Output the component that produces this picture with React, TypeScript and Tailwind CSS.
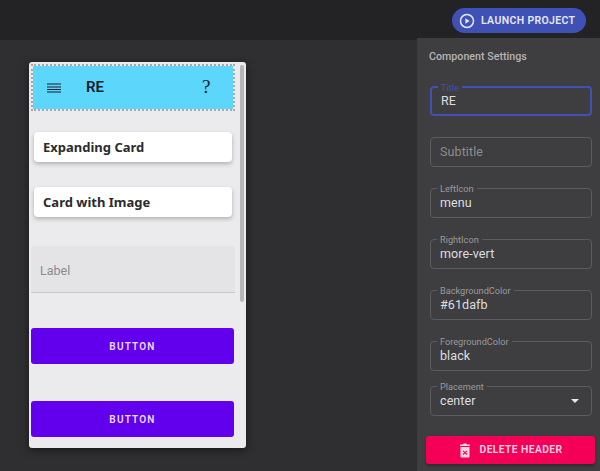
const fieldFont = { fontFamily: "Roboto, sans-serif" };

function Field({ label, value, focused, muted, select, className }: { label?: string; value: string; focused?: boolean; muted?: boolean; select?: boolean; className?: string }) {
  return (
    <div className={`relative h-[30px] rounded-[4px] border flex items-center justify-between pl-[9px] pr-[12px] ${focused ? "border-[#3f51b5] border-2" : "border-[#5c5b5d]"} ${className ?? ""}`}>
      {label && (
        <span className={`absolute left-[6px] top-[-5px] px-[3px] bg-[#3e3d3f] text-[9.2px] leading-[10px] ${focused ? "text-[#3f51b5]" : "text-[#9b9a9c]"}`}>
          {label}
        </span>
      )}
      <span className={`text-[12.5px] leading-none tracking-[0.1px] ${muted ? "text-[#8e8d8f]" : "text-[#dedee0]"}`}>{value}</span>
      {select && <span className="w-0 h-0 border-l-[4px] border-r-[4px] border-t-[4px] border-l-transparent border-r-transparent border-t-[#e8e8e8]"></span>}
    </div>
  );
}

function Card({ title, className }: { title: string; className?: string }) {
  return (
    <div className={`ml-[3px] w-[198px] h-[30px] bg-white rounded-[4px] shadow-[0_2px_4px_rgba(0,0,0,.25)] flex items-center pl-[9px] pt-[1px] ${className ?? ""}`}>
      <span className="text-[13px] font-bold text-[#2b2b2e] whitespace-nowrap" style={{ fontFamily: "'Noto Sans', sans-serif" }}>{title}</span>
    </div>
  );
}

function PurpleButton({ className }: { className?: string }) {
  return (
    <div className={`w-[203px] h-[36px] bg-[#6200ee] rounded-[3px] flex items-center justify-center text-[10px] font-semibold tracking-[1.2px] text-[#ecdcfb] ${className ?? ""}`}>
      BUTTON
    </div>
  );
}

export default function App() {
  return (
    <div className="w-[600px] h-[471px] overflow-hidden bg-[#2f2e30] flex flex-col" style={fieldFont}>
      <div className="h-[40px] shrink-0 bg-[#232225] flex items-start justify-end pt-[8px] pr-[14px]">
        <div className="h-[25px] w-[134px] rounded-full bg-[#3f51b5] flex items-center pl-[7px] gap-[6px]">
          <svg width="16" height="16" viewBox="0 0 16 16" fill="none">
            <circle cx="8" cy="8" r="6.5" stroke="#e6e8f5" strokeWidth="1.5" />
            <path d="M6.4 5.2 L10.6 8 L6.4 10.8 Z" fill="#e6e8f5" />
          </svg>
          <span className="text-[10.5px] font-semibold tracking-[0.35px] text-[#e6e8f5] whitespace-nowrap">LAUNCH PROJECT</span>
        </div>
      </div>
      <div className="flex flex-1 min-h-0">
        <div className="flex-1 pl-[29px] pt-[22px]">
          <div className="relative w-[217px] h-[386px] bg-[#ebeaec] rounded-[3px] shadow-[0_2px_8px_rgba(0,0,0,.5)] pt-[2px] pl-[2px]">
            <div className="w-[204px] h-[47px] bg-[#5cd6fb] bg-clip-padding border-2 border-dotted border-[#a9a9ab] flex items-center text-[#10202c]">
              <svg className="ml-[14px]" width="14" height="12" viewBox="0 0 14 12" fill="none" stroke="#10202c" strokeWidth="1.2">
                <path d="M0 2 H14 M0 5 H14 M0 7.5 H14 M0 10 H14" />
              </svg>
              <span className="ml-[25px] text-[15px] font-semibold">RE</span>
              <span className="ml-[98px] text-[19px]" style={{ fontFamily: "'Liberation Serif', serif" }}>?</span>
            </div>
            <Card title="Expanding Card" className="mt-[21px]" />
            <Card title="Card with Image" className="mt-[25px] pt-[2px]" />
            <div className="mt-[29px] w-[204px] h-[47px] bg-[#e4e4e6] border-b border-[#c8c7ca] rounded-t-[3px] flex items-center pl-[9px] pt-[5px] text-[12.5px] text-[#8b8b8e]">
              Label
            </div>
            <PurpleButton className="mt-[35px]" />
            <PurpleButton className="mt-[37px]" />
            <div className="absolute right-[2px] top-[3px] w-[4px] h-[237px] rounded-full bg-[#b5b4b7]"></div>
          </div>
        </div>
        <div className="w-[183px] shrink-0 -mt-[2px] bg-[#3e3d3f] pl-[13px] pr-[8px] pt-[12px]">
          <div className="-ml-[1px] text-[10.7px] font-medium leading-[14px] text-[#b5b4b6]">Component Settings</div>
          <Field label="Title" value="RE" focused className="mt-[22px]" />
          <Field value="Subtitle" muted className="mt-[21px]" />
          <Field label="LeftIcon" value="menu" className="mt-[21px]" />
          <Field label="RightIcon" value="more-vert" className="mt-[21px]" />
          <Field label="BackgroundColor" value="#61dafb" className="mt-[21px]" />
          <Field label="ForegroundColor" value="black" className="mt-[21px]" />
          <Field label="Placement" value="center" select className="mt-[15px]" />
          <div className="mt-[20px] -ml-[4px] -mr-[3px] h-[28px] bg-[#f50057] rounded-[3px] flex items-center justify-center gap-[9px] shadow-[0_2px_3px_rgba(0,0,0,.3)]">
            <svg width="12" height="15" viewBox="0 0 12 15" fill="#f6d6e4">
              <path d="M1 1.5 H4 L4.6 .5 H7.4 L8 1.5 H11 V3 H1 Z" />
              <path fillRule="evenodd" d="M1.5 4 H10.5 V13.5 C10.5 14.2 10 14.6 9.4 14.6 H2.6 C2 14.6 1.5 14.2 1.5 13.5 Z M4.4 7.4 L3.6 8.2 L5.2 9.6 L3.6 11.1 L4.4 11.9 L6 10.4 L7.6 11.9 L8.4 11.1 L6.8 9.6 L8.4 8.2 L7.6 7.4 L6 8.9 Z" />
            </svg>
            <span className="text-[10.3px] font-semibold tracking-[0.4px] text-[#f6d6e4] whitespace-nowrap">DELETE HEADER</span>
          </div>
        </div>
      </div>
    </div>
  );
}
